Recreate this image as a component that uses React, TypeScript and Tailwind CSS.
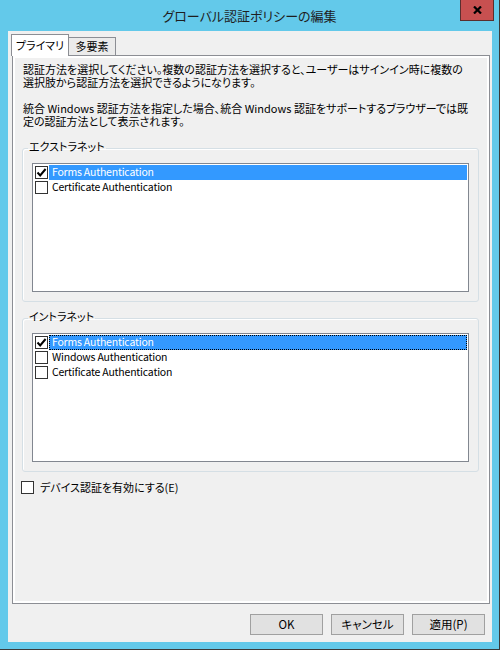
import React from 'react';

type ItemProps = {
  label: string;
  checked?: boolean;
  selected?: boolean;
  focus?: boolean;
};

const CheckBox: React.FC<{ checked?: boolean }> = ({ checked }) => (
  <div className="w-[13px] h-[13px] shrink-0 border border-[#333333] bg-white flex items-center justify-center">
    {checked && (
      <svg width="11" height="11" viewBox="0 0 11 11">
        <path d="M1.5 5.5 L4.2 8.4 L9.6 2" fill="none" stroke="#000" strokeWidth="2" />
      </svg>
    )}
  </div>
);

const ListItem: React.FC<ItemProps> = ({ label, checked, selected, focus }) => (
  <div className="flex h-[15px] items-center pl-[2px] pr-px">
    <CheckBox checked={checked} />
    <div
      className={`ml-px flex-1 h-full flex items-center text-[10.5px] tracking-[-0.2px] leading-none ${
        selected ? 'bg-[#3399ff] text-white' : 'text-black'
      } ${focus ? 'border border-dotted border-black pl-[2px]' : 'pl-[3px]'}`}
    >
      {label}
    </div>
  </div>
);

const GroupBox: React.FC<{ title: string; className?: string; children: React.ReactNode }> = ({
  title,
  className,
  children,
}) => (
  <fieldset
    className={`ml-[7px] mr-[8px] border border-[#d5dfe5] rounded-[3px] shadow-[inset_1px_1px_0_#ffffff] ${className ?? ''}`}
  >
    <legend className="ml-[5px] px-px text-[11px] leading-[16px] pb-[4px]">{title}</legend>
    <div className="mx-[9px] mt-[5px] mb-[9px] h-[129px] border border-[#828790] bg-white pt-px">{children}</div>
  </fieldset>
);

const DialogButton: React.FC<{ label: string }> = ({ label }) => (
  <button className="w-[73px] h-[21px] border border-[#a0a0a0] bg-[#e1e1e1] text-[11.5px] leading-none text-black">
    {label}
  </button>
);

export default function App() {
  return (
    <div className="w-[500px] h-[650px] bg-[#63c9ea] border-r border-b border-[#3a3a3a] flex flex-col font-['Noto_Sans_CJK_JP','Liberation_Sans',sans-serif] [font-feature-settings:'palt'] text-black">
      {/* title bar */}
      <div className="relative h-[31px] shrink-0 flex items-center justify-center">
        <span className="text-[13px] text-[#1e1e1e] leading-none">グローバル認証ポリシーの編集</span>
        <button className="absolute right-[5px] top-0 w-[34px] h-[21px] bg-[#c75050] border border-[#5a2e2e] border-t-0 flex items-center justify-center">
          <svg width="9" height="8" viewBox="0 0 9 8">
            <path d="M1 0.5 L8 7.5 M8 0.5 L1 7.5" stroke="#000" strokeWidth="2.2" />
          </svg>
        </button>
      </div>

      {/* client area */}
      <div className="flex-1 ml-[8px] mr-[7px] mb-[7px] bg-[#f0f0f0] flex flex-col pt-[3px] pl-[3px] pr-[2px]">
        <div className="flex items-end h-[22px] shrink-0">
          <div className="relative z-10 w-[58px] h-[22px] border border-b-0 border-[#8c8e94] bg-white flex items-center justify-center text-[11px] leading-none">
            プライマリ
          </div>
          <div className="-ml-px w-[48px] h-[19px] border border-[#8c8e94] bg-[#ebebeb] flex items-center justify-center text-[11px] leading-none">
            多要素
          </div>
        </div>

        <div className="-mt-px ml-px flex-1 border border-[#8c8e94] bg-white p-[2px] flex flex-col">
          <div className="flex-1 bg-[#f0f0f0] pt-[5px]">
            <div className="pl-[8px] text-[11px] leading-[13px] whitespace-nowrap">
              <div>認証方法を選択してください。複数の認証方法を選択すると、ユーザーはサインイン時に複数の</div>
              <div>選択肢から認証方法を選択できるようになります。</div>
            </div>
            <div className="pl-[8px] mt-[13px] text-[11px] leading-[13px] whitespace-nowrap">
              <div>統合 Windows 認証方法を指定した場合、統合 Windows 認証をサポートするブラウザーでは既</div>
              <div>定の認証方法として表示されます。</div>
            </div>

            <GroupBox title="エクストラネット" className="mt-[10px]">
              <ListItem label="Forms Authentication" checked selected />
              <ListItem label="Certificate Authentication" />
            </GroupBox>

            <GroupBox title="イントラネット" className="mt-[6px]">
              <ListItem label="Forms Authentication" checked selected focus />
              <ListItem label="Windows Authentication" />
              <ListItem label="Certificate Authentication" />
            </GroupBox>

            <div className="mt-[9px] ml-[6px] flex items-center gap-[6px]">
              <CheckBox />
              <span className="text-[11px] leading-none">デバイス認証を有効にする(E)</span>
            </div>
          </div>
        </div>

        <div className="shrink-0 flex justify-end gap-[8px] pt-[10px] pb-[7px] pr-[5px]">
          <DialogButton label="OK" />
          <DialogButton label="キャンセル" />
          <DialogButton label="適用(P)" />
        </div>
      </div>
    </div>
  );
}
